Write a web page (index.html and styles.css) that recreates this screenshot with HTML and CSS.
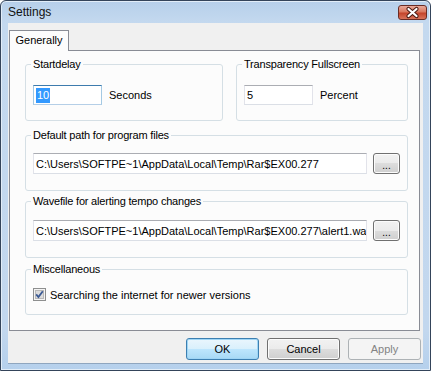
FILE: index.html
```html
<!DOCTYPE html>
<html lang="en">
<head>
  <meta charset="UTF-8">
  <title>Settings</title>
  <link rel="stylesheet" href="styles.css">
</head>
<body>
  <div class="window">
    <div class="titlebar">
      <span class="title">Settings</span>
      <span class="close">
        <svg width="29" height="15" viewBox="0 0 29 15">
          <path d="M10.5 4 L18.5 11 M18.5 4 L10.5 11" stroke="#4a1a12" stroke-width="4.2" stroke-linecap="round"/>
          <path d="M10.5 4 L18.5 11 M18.5 4 L10.5 11" stroke="#fff" stroke-width="2.2" stroke-linecap="round"/>
        </svg>
      </span>
    </div>

    <div class="client">
      <div class="tabs">
        <div class="tab">Generally</div>
      </div>

      <div class="panel">
        <div class="row-top">
          <fieldset class="group top">
            <legend>Startdelay</legend>
            <div class="field">
              <span class="edit small focused"><span class="sel">10</span></span>
              <span>Seconds</span>
            </div>
          </fieldset>
          <fieldset class="group top">
            <legend>Transparency Fullscreen</legend>
            <div class="field">
              <span class="edit small">5</span>
              <span>Percent</span>
            </div>
          </fieldset>
        </div>

        <fieldset class="group path">
          <legend>Default path for program files</legend>
          <div class="field">
            <span class="edit wide">C:\Users\SOFTPE~1\AppData\Local\Temp\Rar$EX00.277</span>
            <span class="btn browse">...</span>
          </div>
        </fieldset>

        <fieldset class="group wave">
          <legend>Wavefile for alerting tempo changes</legend>
          <div class="field">
            <span class="edit wide">C:\Users\SOFTPE~1\AppData\Local\Temp\Rar$EX00.277\alert1.wav</span>
            <span class="btn browse">...</span>
          </div>
        </fieldset>

        <fieldset class="group misc">
          <legend>Miscellaneous</legend>
          <label class="check">
            <svg width="13" height="13" viewBox="0 0 13 13">
              <rect x="0.5" y="0.5" width="12" height="12" fill="#f4f4f4" stroke="#8e8f8f"/>
              <rect x="2.5" y="2.5" width="8" height="8" fill="#dcdcdc" stroke="#b8b8b8"/>
              <path d="M3.2 6.4 L5.4 9 L9.8 3.2" fill="none" stroke="#3b5a94" stroke-width="1.8"/>
            </svg>
            <span>Searching the internet for newer versions</span>
          </label>
        </fieldset>
      </div>

      <div class="buttons">
        <span class="btn dialog default">OK</span>
        <span class="btn dialog">Cancel</span>
        <span class="btn dialog disabled">Apply</span>
      </div>
    </div>
  </div>
</body>
</html>
```

FILE: styles.css
```css
* {
  box-sizing: border-box;
}

body {
  margin: 0;
  font-family: "Liberation Sans", Arial, sans-serif;
  font-size: 11px;
  color: #000;
}

.window {
  width: 431px;
  height: 371px;
  border: 1px solid #34445a;
  border-radius: 6px 6px 0 0;
  background: linear-gradient(#b6cfea, #c4d9ef 22px, #c2d7ee 330px, #b5d0ec);
  box-shadow: inset 0 0 0 1px #e2edf8;
  display: flex;
  flex-direction: column;
}

.titlebar {
  height: 22px;
  display: flex;
  align-items: center;
  justify-content: space-between;
  padding: 0 3px 0 7px;
}

.title {
  font-size: 12px;
  color: #111;
}

.close {
  width: 29px;
  height: 15px;
  border: 1px solid #6a2c24;
  border-radius: 3px;
  background: linear-gradient(#e9a99a, #d9785f 45%, #c4442b 55%, #d8735a);
  display: flex;
  align-items: center;
  justify-content: center;
}

.close svg {
  margin: -1px;
}

.client {
  flex: 1;
  margin: 0 7px 6px;
  background: #f0f0f0;
  border-bottom: 1px solid #8fa6bf;
  display: flex;
  flex-direction: column;
}

.tabs {
  display: flex;
  padding: 7px 0 0 1px;
}

.tab {
  width: 60px;
  height: 21px;
  margin-bottom: -1px;
  border: 1px solid #898c95;
  border-bottom: none;
  background: #fcfcfc;
  position: relative;
  z-index: 1;
  text-align: center;
  line-height: 18px;
}

.panel {
  height: 281px;
  margin: 0 3px 0 1px;
  border: 1px solid #898c95;
  background: #fcfcfc;
  padding: 7px 11px 0 15px;
}

.row-top {
  display: grid;
  grid-template-columns: 198px 1fr;
  gap: 13px;
}

.group {
  margin: 0;
  min-width: 0;
  border: 1px solid #d5dfe5;
  border-radius: 3px;
  padding: 14px 7px 15px;
}

.group legend {
  margin-left: -2px;
  padding: 0 2px;
  line-height: 13px;
  letter-spacing: -0.2px;
}

.path {
  margin-top: 8px;
  padding: 11px 7px 16px;
}

.wave {
  margin-top: 4px;
  padding: 12px 7px 16px;
}

.misc {
  margin-top: 5px;
  padding: 12px 7px 13px;
}

.field {
  display: flex;
  align-items: center;
  gap: 7px;
}

.edit {
  height: 20px;
  display: flex;
  align-items: center;
  padding: 0 2px;
  background: #fff;
  border: 1px solid #dbdfe6;
  border-top-color: #abadb3;
  border-left-color: #e2e3ea;
  border-right-color: #e2e3ea;
  white-space: nowrap;
  overflow: hidden;
}

.small {
  width: 69px;
}

.wide {
  flex: 1;
  height: 21px;
}

.focused {
  border-color: #b5cfe7;
  border-top-color: #3d7bad;
  border-left-color: #a4c9e3;
  border-right-color: #a4c9e3;
}

.sel {
  background: #3399ff;
  color: #fff;
  line-height: 15px;
  padding: 0 1px;
}

.btn {
  display: flex;
  align-items: center;
  justify-content: center;
  border: 1px solid #707070;
  border-radius: 3px;
  background: linear-gradient(#f2f2f2, #ebebeb 50%, #dddddd 50%, #cfcfcf);
  box-shadow: inset 0 0 0 1px #fcfcfc;
}

.browse {
  width: 27px;
  height: 21px;
  margin-left: -1px;
  padding-top: 3px;
  font-size: 10px;
}

.check {
  display: flex;
  align-items: center;
  gap: 4px;
  height: 13px;
}

.buttons {
  display: flex;
  justify-content: flex-end;
  gap: 8px;
  padding: 7px 2px 0 0;
}

.dialog {
  width: 73px;
  height: 22px;
  font-size: 11px;
}

.default {
  border-color: #3c7fb1;
  box-shadow: inset 0 0 0 1px #9fd5f5;
  background: linear-gradient(#eaf6fd, #d9f0fc 50%, #bee6fd 50%, #a7d9f5);
}

.disabled {
  border-color: #adb2b5;
  background: #f4f4f4;
  box-shadow: none;
  color: #838383;
}
```
